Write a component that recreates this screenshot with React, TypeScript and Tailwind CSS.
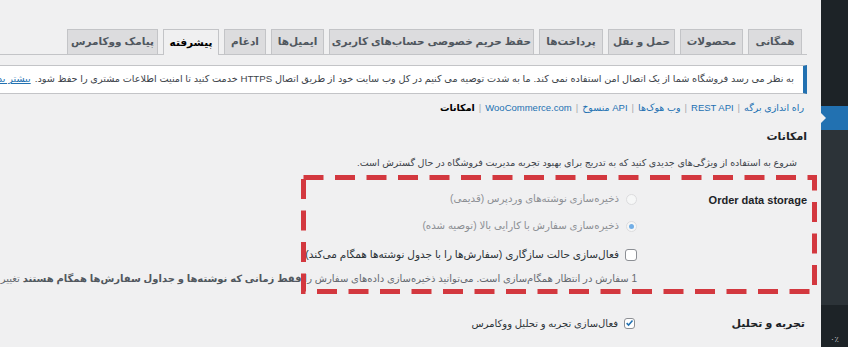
export default function App() {
  const tabs = [
    { t: "همگانی", w: "w-[54px]" },
    { t: "محصولات", w: "w-[63px]" },
    { t: "حمل و نقل", w: "w-[67px]" },
    { t: "پرداخت‌ها", w: "w-[64px]" },
    { t: "حفظ حریم خصوصی حساب‌های کاربری", w: "w-[205px]" },
    { t: "ایمیل‌ها", w: "w-[53px]" },
    { t: "ادغام", w: "w-[42px]" },
    { t: "پیشرفته", w: "w-[56px]", active: true },
    { t: "پیامک ووکامرس", w: "w-[91px]" },
  ];
  return (
    <div
      dir="rtl"
      className="flex h-[347px] w-[848px] overflow-hidden bg-[#f0f0f1] font-['Liberation_Sans','DejaVu_Sans',sans-serif] text-[#3c434a]"
    >
      {/* admin sidebar (right side in RTL) */}
      <aside className="flex w-[27px] shrink-0 flex-col bg-[#1d2327]">
        <div className="h-[106px]" />
        <div className="relative h-[24px] bg-[#2271b1]">
          <span className="absolute left-0 top-1/2 -translate-y-1/2 border-y-[5px] border-l-[5px] border-y-transparent border-l-[#f0f0f1]" />
        </div>
        <div className="h-[175px] bg-[#2c3338]" />
        <div className="flex flex-1 items-end justify-center pb-[1px] text-[8px] text-[#c3c4c7]">۰٪</div>
      </aside>

      <main className="relative min-w-0 flex-1 overflow-hidden pr-[14px]">
        {/* tabs */}
        <nav className="mt-[29px] flex h-[26px] items-end gap-[5px] border-b border-[#c3c4c7] pr-[5px]">
          {tabs.map((tab) => (
            <div
              key={tab.t}
              className={
                tab.active
                  ? `-mb-px flex h-[26px] shrink-0 items-center justify-center whitespace-nowrap border border-b-0 border-[#c3c4c7] bg-[#f0f0f1] text-[10.5px] font-bold text-[#000] ${tab.w}`
                  : `flex h-[25px] shrink-0 items-center justify-center whitespace-nowrap border border-b-0 border-[#c3c4c7] bg-[#dcdcde] text-[10.5px] font-bold text-[#50575e] ${tab.w}`
              }
            >
              {tab.t}
            </div>
          ))}
        </nav>

        {/* notice */}
        <div className="-ml-[60px] mt-[10px] flex h-[29px] items-center whitespace-nowrap border border-r-4 border-[#c3c4c7] border-r-[#2271b1] bg-white pr-[9px] text-[9.7px] text-[#3c434a]">
          به نظر می رسد فروشگاه شما از یک اتصال امن استفاده نمی کند. ما به شدت توصیه می کنیم در کل وب سایت خود از طریق اتصال HTTPS خدمت کنید تا امنیت اطلاعات مشتری را حفظ شود.
          <a className="mr-[4px] text-[#2271b1] underline">بیشتر بدانید</a>
        </div>

        {/* sub links */}
        <div className="mt-[6px] flex h-[16px] items-center gap-[4px] pr-[3px] text-[9.5px] text-[#2271b1]">
          <a>راه اندازی برگه</a>
          <span className="text-[#a7aaad]">|</span>
          <a>REST API</a>
          <span className="text-[#a7aaad]">|</span>
          <a>وب هوک‌ها</a>
          <span className="text-[#a7aaad]">|</span>
          <a>API منسوخ</a>
          <span className="text-[#a7aaad]">|</span>
          <a>WooCommerce.com</a>
          <span className="text-[#a7aaad]">|</span>
          <span className="font-bold text-[#000]">امکانات</span>
        </div>

        {/* heading */}
        <h2 className="mt-[12px] flex h-[16px] items-center text-[11px] font-bold text-[#1d2327]">امکانات</h2>

        <p className="mt-[11px] flex h-[16px] items-center pr-[10px] text-[9.5px] text-[#3c434a]">
          شروع به استفاده از ویژگی‌های جدیدی کنید که به تدریج برای بهبود تجربه مدیریت فروشگاه در حال گسترش است.
        </p>

        {/* order data storage row */}
        <div className="mt-[20px] flex">
          <div className="w-[170px] shrink-0 pt-[1px] text-[11px] font-bold text-[#1d2327]">
            <div className="flex h-[16px] items-center">Order data storage</div>
          </div>
          <div className="flex min-w-0 flex-1 flex-col text-[10.5px]">
            <label className="flex h-[16px] items-center gap-[7px] whitespace-nowrap text-[10.2px] text-[#8c8f94]">
              <span className="h-[11px] w-[11px] shrink-0 rounded-full border border-[#dcdcde] bg-[#f6f7f7]" />
              ذخیره‌سازی نوشته‌های وردپرس (قدیمی)
            </label>
            <label className="mt-[11px] flex h-[16px] items-center gap-[7px] whitespace-nowrap text-[10.2px] text-[#8c8f94]">
              <span className="flex h-[11px] w-[11px] shrink-0 items-center justify-center rounded-full border border-[#dcdcde] bg-[#f6f7f7]">
                <span className="h-[5px] w-[5px] rounded-full bg-[#72aee6]" />
              </span>
              ذخیره‌سازی سفارش با کارایی بالا (توصیه شده)
            </label>
            <label className="mt-[13px] flex h-[16px] items-center gap-[6px] whitespace-nowrap text-[#2c3338]">
              <span className="h-[12px] w-[12px] shrink-0 rounded-[3px] border border-[#8c8f94] bg-white" />
              فعال‌سازی حالت سازگاری (سفارش‌ها را با جدول نوشته‌ها همگام می‌کند).
            </label>
            <p className="mt-[7px] flex h-[16px] items-center whitespace-nowrap text-[10px] text-[#646970]">
              1 سفارش در انتظار همگام‌سازی است. می‌توانید ذخیره‌سازی داده‌های سفارش را&nbsp;
              <b className="text-[#50575e]">فقط زمانی که نوشته‌ها و جداول سفارش‌ها همگام هستند</b>
              &nbsp;تغییر دهید.
            </p>
          </div>
        </div>

        {/* analytics row */}
        <div className="mt-[29px] flex">
          <div className="w-[172px] shrink-0 pr-[2px] text-[11px] font-bold text-[#1d2327]">
            <div className="flex h-[16px] items-center">تجربه و تحلیل</div>
          </div>
          <label className="flex h-[16px] items-center gap-[6px] whitespace-nowrap text-[10px] text-[#2c3338]">
            <span className="flex h-[11px] w-[11px] shrink-0 items-center justify-center rounded-[3px] border border-[#8c8f94] bg-white">
              <svg viewBox="0 0 12 12" className="h-[10px] w-[10px]">
                <path d="M2.2 6.2 L4.8 8.8 L10 2.8" fill="none" stroke="#2271b1" strokeWidth="2" />
              </svg>
            </span>
            فعال‌سازی تجربه و تحلیل ووکامرس
          </label>
        </div>

        {/* red dashed annotation overlay */}
        <svg
          className="pointer-events-none absolute left-[301px] top-[175px]"
          width="516"
          height="119"
          viewBox="0 0 516 119"
        >
          <rect
            x="2.5"
            y="2.5"
            width="511"
            height="114"
            fill="none"
            stroke="#d3383f"
            strokeWidth="5"
            strokeDasharray="20 11.5"
          />
        </svg>
      </main>
    </div>
  );
}
